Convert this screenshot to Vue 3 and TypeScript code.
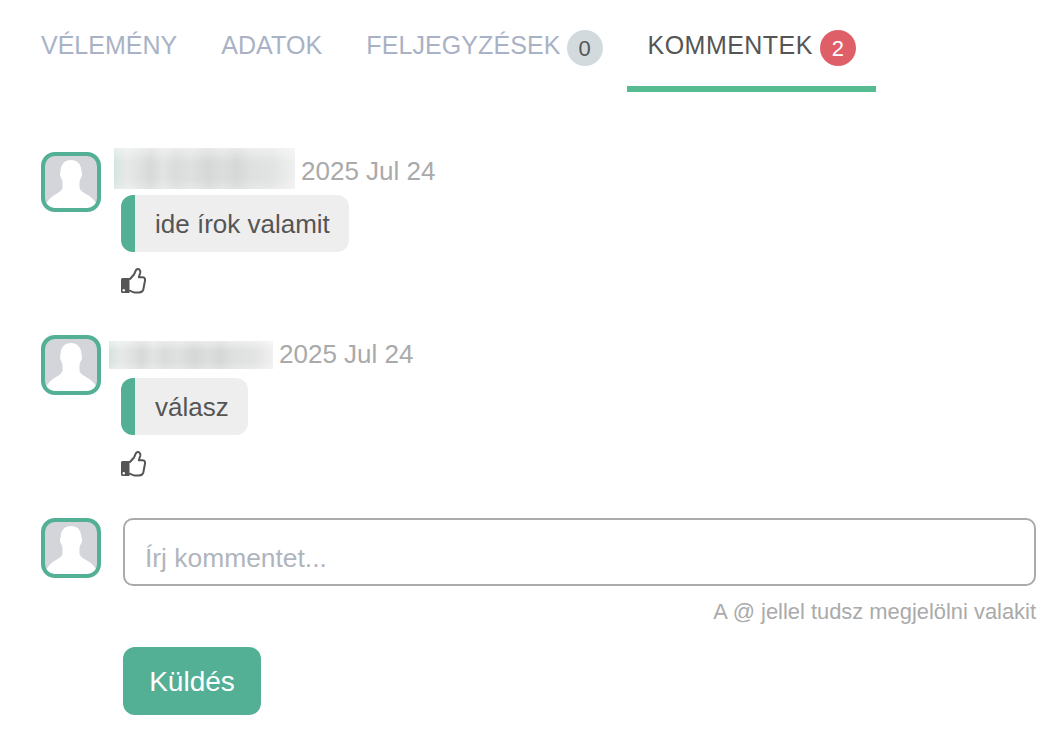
<template>
  <div class="page">
    <nav class="tabs">
      <a v-for="tab in tabs" :key="tab.label" class="tab" :class="{ active: tab.active }">
        <span class="tab-label">{{ tab.label }}</span>
        <span v-if="tab.count !== undefined" class="badge" :class="{ danger: tab.active }">{{ tab.count }}</span>
      </a>
    </nav>

    <div class="comments">
      <div v-for="c in comments" :key="c.text" class="comment">
        <div class="avatar">
          <svg viewBox="0 0 52 52" width="52" height="52">
            <path fill="#fff" :d="silhouette" />
          </svg>
        </div>
        <div class="comment-body">
          <div class="comment-head">
            <span class="name" :class="c.nameClass"></span>
            <span class="date">{{ c.date }}</span>
          </div>
          <div class="bubble"><span class="bubble-text">{{ c.text }}</span></div>
          <button class="like" type="button" aria-label="Tetszik">
            <svg viewBox="0 0 25 26" width="25" height="26">
              <path
                d="M9 11 L13 6.5 C14.3 4.8 14 2 16 1.2 C18.4 .4 19.8 2.8 19.2 5 L17.8 9.2 H21.8 C24 9.2 24.4 11.5 23.8 13.7 L22.3 21.5 C21.8 23.7 20 24.4 18 24.4 H13.5 C11.5 24.4 10.5 23.7 9 22.7"
                fill="none"
                stroke="#555"
                stroke-width="2"
                stroke-linejoin="round"
                stroke-linecap="round"
              />
              <path d="M1.5 10 H8.5 V25 H1.5 A1.5 1.5 0 0 1 0 23.5 V11.5 A1.5 1.5 0 0 1 1.5 10 Z" fill="#555" />
              <circle cx="2.8" cy="22.3" r="1.2" fill="#fff" />
            </svg>
          </button>
        </div>
      </div>

      <div class="composer">
        <div class="avatar">
          <svg viewBox="0 0 52 52" width="52" height="52">
            <path fill="#fff" :d="silhouette" />
          </svg>
        </div>
        <form class="composer-form" @submit.prevent>
          <input class="input" type="text" placeholder="Írj kommentet..." />
          <p class="hint">A @ jellel tudsz megjelölni valakit</p>
          <button class="send" type="submit">Küldés</button>
        </form>
      </div>
    </div>
  </div>
</template>

<script setup lang="ts">
interface Tab {
  label: string
  count?: number
  active?: boolean
}

const tabs: Tab[] = [
  { label: 'VÉLEMÉNY' },
  { label: 'ADATOK' },
  { label: 'FELJEGYZÉSEK', count: 0 },
  { label: 'KOMMENTEK', count: 2, active: true },
]

const comments = [
  { text: 'ide írok valamit', date: '2025 Jul 24', nameClass: 'name-a' },
  { text: 'válasz', date: '2025 Jul 24', nameClass: 'name-b' },
]

const silhouette =
  'M26 4 C32 4 36 8 36.3 14 C36.5 16 37.5 18 36.8 20 C36 22 35 23 34.5 26 L34.5 32 C35.5 35 38 36.5 41 38 C45 40 48.5 43 51 47 L52 48 V52 H0 V48 L1.5 47 C4 43 7 40 11 38 C14 36.5 16.5 35 17.5 32 V26 C17 23 16 22 15.2 20 C14.5 18 15.5 16 15.7 14 C16 8 20 4 26 4 Z'
</script>

<style>
html,
body {
  background: #fff;
}
</style>

<style scoped>
.page {
  font-family: 'Liberation Sans', Arial, sans-serif;
  padding: 0 23px 0 20px;
  color: #555;
}

.tabs {
  display: flex;
  gap: 3px;
  height: 92px;
}

.tab {
  display: flex;
  align-items: flex-start;
  gap: 6px;
  padding: 30px 20px 0 21px;
  font-size: 25px;
  letter-spacing: 0.1px;
  color: #a9b2c5;
  border-bottom: 6px solid transparent;
  box-sizing: border-box;
}

.tab:first-child {
  letter-spacing: 0;
}

.tab.active {
  gap: 7px;
  margin-left: 1px;
  letter-spacing: 0.45px;
  color: #555;
  border-bottom-color: #57bb92;
}

.tab-label {
  line-height: 30px;
}

.badge {
  width: 36px;
  height: 36px;
  border-radius: 50%;
  background: #d3dade;
  color: #555;
  font-size: 22px;
  line-height: 37px;
  letter-spacing: 0;
  text-align: center;
}

.badge.danger {
  background: #de5f68;
  color: #fff;
}

.comments {
  margin-top: 60px;
  padding-left: 21px;
}

.comment {
  display: flex;
  gap: 20px;
  margin-bottom: 41px;
}

.avatar {
  flex: none;
  width: 60px;
  height: 60px;
  box-sizing: border-box;
  border: 4px solid #53b095;
  border-radius: 14px;
  background: #d3d5da;
  overflow: hidden;
}

.avatar svg {
  display: block;
}

.comment-body {
  flex: 1;
}

.comment-head {
  display: flex;
  align-items: flex-start;
  gap: 6px;
  height: 38px;
}

.name {
  display: block;
  background:
    linear-gradient(180deg, rgba(255, 255, 255, 0.45) 0%, rgba(255, 255, 255, 0) 35%, rgba(255, 255, 255, 0) 75%, rgba(255, 255, 255, 0.25) 100%),
    linear-gradient(90deg, #d5e4de 0%, #e6e9e8 7%, #dfe2e1 14%, #d5d9d7 20%, #e2e4e3 27%, #d9dcdb 34%, #dfe1e0 42%, #d5d8d7 52%, #dcdedd 60%, #d4d8d6 68%, #dfe1e0 76%, #e2e3e3 88%, #f0f0f0 100%);
}

.name-a {
  width: 181px;
  height: 41px;
  margin: -4px 0 0 -7px;
}

.name-b {
  width: 164px;
  height: 28px;
  margin: 6px 0 0 -12px;
}

.date {
  font-size: 26px;
  line-height: 38px;
  color: #aaa;
}

.bubble {
  display: table;
  margin-top: 5px;
  height: 57px;
  box-sizing: border-box;
  padding: 1px 19px 0 20px;
  border-left: 14px solid #53b095;
  border-radius: 12px;
  background: #eee;
  font-size: 26px;
  color: #555;
}

.bubble-text {
  line-height: 56px;
}

.like {
  display: block;
  margin-top: 16px;
  padding: 0;
  border: 0;
  background: none;
}

.like svg {
  display: block;
}

.composer {
  display: flex;
  gap: 22px;
}

.composer-form {
  flex: 1;
}

.input {
  display: block;
  width: 100%;
  height: 68px;
  box-sizing: border-box;
  padding: 12px 20px 0;
  border: 2px solid #aaa;
  border-radius: 10px;
  outline: none;
  font-family: inherit;
  font-size: 26.4px;
  color: #555;
}

.input::placeholder {
  color: #b0b5bd;
  opacity: 1;
}

.hint {
  margin: 14px 0 0;
  text-align: right;
  font-size: 21.9px;
  line-height: 24px;
  color: #aaa;
}

.send {
  display: block;
  margin-top: 23px;
  width: 138px;
  height: 68px;
  padding: 2px 0 0;
  border: 0;
  border-radius: 12px;
  background: #53b095;
  color: #fff;
  font-family: inherit;
  font-size: 28px;
}
</style>
